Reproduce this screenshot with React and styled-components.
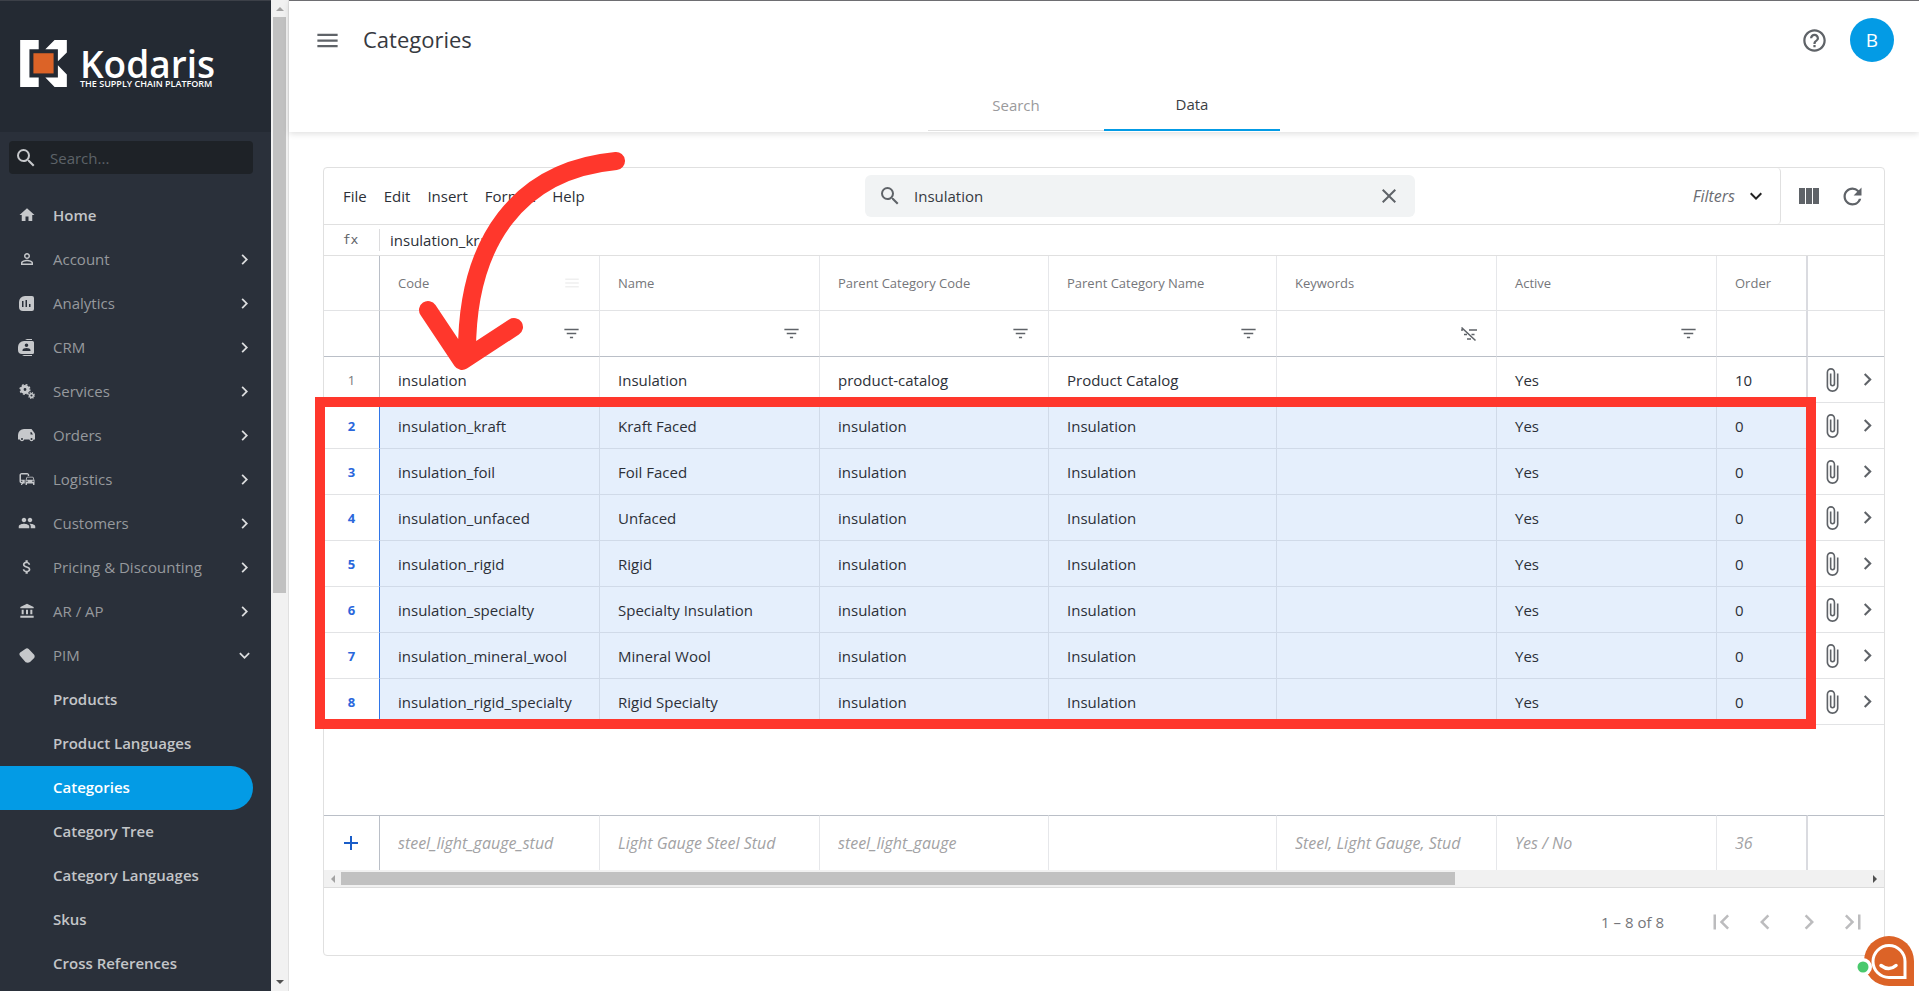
import styled, { createGlobalStyle, css } from "styled-components";
import {
  MdHome,
  MdPersonOutline,
  MdOutlineCommute,
  MdPeople,
  MdAttachMoney,
  MdAccountBalance,
  MdChevronRight,
  MdChevronLeft,
  MdExpandMore,
  MdSearch,
  MdClose,
  MdMenu,
  MdHelpOutline,
  MdRefresh,
  MdFilterList,
  MdAttachFile,
  MdFirstPage,
  MdLastPage,
  MdAdd,
} from "react-icons/md";

const GlobalStyle = createGlobalStyle`
  * {
    box-sizing: border-box;
  }

  body {
    margin: 0;
    background-color: #ffffff;
    color: #2c3038;
    font-family: "Open Sans", "Noto Sans", sans-serif;
    font-size: 15px;
    line-height: 20px;
  }

  button,
  input {
    font: inherit;
    color: inherit;
    border: none;
    background: none;
    padding: 0;
    outline: none;
  }

  svg {
    display: block;
    flex-shrink: 0;
  }
`;

/* ---------- icons ---------- */

const AnalyticsIcon = () => (
  <svg width="15" height="15" viewBox="0 0 15 15">
    <path
      fill="currentColor"
      fillRule="evenodd"
      d="M6 0h7a2 2 0 0 1 2 2v11a2 2 0 0 1-2 2H4a4 4 0 0 1-4-4V6a6 6 0 0 1 6-6zM3 5v6h1.500V5zM6.500 4v7H8V4zM10 8v3h1.500V8z"
    />
  </svg>
);

const CrmIcon = () => (
  <svg width="17" height="17" viewBox="0 0 17 17">
    <path
      fill="currentColor"
      fillRule="evenodd"
      d="M9 0h5v1H7zM6 2h8.500a1.500 1.500 0 0 1 1.500 1.500v10a1.500 1.500 0 0 1-1.500 1.500H4a4 4 0 0 1-4-4V8a6 6 0 0 1 6-6zM8.500 4.500a1.800 1.800 0 1 0 0 3.600a1.800 1.800 0 1 0 0-3.600zM4.500 12h8v-1c0-1.300-2-2-4-2s-4 .7-4 2zM4 16h10v1H6z"
    />
  </svg>
);

const GearsIcon = () => (
  <svg width="16" height="15" viewBox="0 0 16 15" fill="none" stroke="currentColor">
    <circle cx="6" cy="5.500" r="3" strokeWidth="3.200" />
    <circle cx="6" cy="5.500" r="4.900" strokeWidth="1.400" strokeDasharray="1.924" />
    <circle cx="12.500" cy="11.500" r="1.800" strokeWidth="1.500" />
    <circle cx="12.500" cy="11.500" r="2.900" strokeWidth="1.200" strokeDasharray="1.139" />
  </svg>
);

const VanIcon = () => (
  <svg width="17" height="13" viewBox="0 0 17 13">
    <path
      fill="currentColor"
      fillRule="evenodd"
      d="M6 0h7.500l3 4a2.500 2.500 0 0 1 .5 1.500v5h-1.300a2.300 2.300 0 0 1-4.400 0H6.200a2.300 2.300 0 0 1-4.400 0H0V6a6 6 0 0 1 6-6zM12.500 3v2.500h2.500L13.300 3zM4 9a1 1 0 1 0 0 2a1 1 0 1 0 0-2zM13.500 9a1 1 0 1 0 0 2a1 1 0 1 0 0-2z"
    />
  </svg>
);

const TagIcon = () => (
  <svg width="16" height="15" viewBox="0 0 46 44">
    <path
      fill="currentColor"
      d="M3 13L18 3q5-4 10 0l16 17q3 5 0 9L32 41q-6 4-13 1L2 22q-3-5 1-9z"
    />
  </svg>
);

const ColumnsIcon = () => (
  <svg width="20" height="16" viewBox="0 0 20 16" fill="currentColor">
    <rect width="6" height="16" />
    <rect x="7" width="6" height="16" />
    <rect x="14" width="6" height="16" />
  </svg>
);

const FilterOffIcon = () => (
  <svg width="18" height="16" viewBox="0 0 18 16">
    <path
      stroke="currentColor"
      strokeWidth="1.600"
      fill="none"
      d="M1.500 1.500l14 13M9 4h8M1 4h2M4 8.500h3M11.500 8.500h3M7 13h4"
    />
  </svg>
);

const LogoMark = () => (
  <svg width="47" height="47" viewBox="0 0 141 142">
    <path fill="#fff" d="M0 0h56v28H28v85h28v29H0z" />
    <path fill="#fff" d="M104 0h37v38l-27 26V28H76z" />
    <path fill="#fff" d="M114 76l27 28v38h-37l-28-29h38z" />
    <rect x="40" y="40" width="61" height="61" fill="#dc6327" />
  </svg>
);

const Triangle = ({ direction, color }) => {
  const paths = {
    up: "M0 5l4-4 4 4z",
    down: "M0 1l4 4 4-4z",
    left: "M5 0L1 4l4 4z",
    right: "M1 0l4 4-4 4z",
  };
  const vertical = direction === "up" || direction === "down";
  return (
    <svg width={vertical ? 8 : 6} height={vertical ? 6 : 8}>
      <path d={paths[direction]} fill={color} />
    </svg>
  );
};

/* ---------- sidebar ---------- */

const Layout = styled.div`
  display: flex;
  height: 100vh;
  overflow: hidden;
`;

const Sidebar = styled.aside`
  flex: 0 0 271px;
  overflow: hidden;
  background-color: #2a303a;
  color: #c6c8cb;
`;

const Brand = styled.div`
  display: flex;
  gap: 13px;
  height: 132px;
  padding: 39px 20px 0;
  border-top: 1px solid #3c4048;
  background-color: #242a33;
  color: #ffffff;
`;

const BrandText = styled.div`
  padding-top: 8px;
`;

const BrandName = styled.div`
  font-size: 37px;
  line-height: 32px;
  font-weight: 600;
`;

const BrandTagline = styled.div`
  font-size: 9px;
  line-height: 8px;
  font-weight: 600;
  white-space: nowrap;
`;

const SideSearch = styled.label`
  display: flex;
  align-items: center;
  gap: 12px;
  height: 33px;
  margin: 9px 18px 20px 9px;
  padding-left: 5px;
  border-radius: 4px;
  background-color: #1e2227;

  input {
    flex: 1;
    min-width: 0;
  }

  input::placeholder {
    color: #5d6268;
    opacity: 1;
  }
`;

const NavLink = styled.a`
  display: flex;
  align-items: center;
  height: 44px;
  margin-right: 18px;
  padding-bottom: 2px;
  color: #96999d;
  text-decoration: none;
  white-space: nowrap;

  ${(props) =>
    props.$strong &&
    css`
      color: #c3c5c8;
      font-weight: 600;
    `}

  ${(props) =>
    props.$active &&
    css`
      border-radius: 0 22px 22px 0;
      background-color: #039be5;
      color: #ffffff;
    `}
`;

const NavIcon = styled.span`
  display: flex;
  justify-content: center;
  width: 53px;
  color: #c6c8cb;
`;

const NavLabel = styled.span`
  flex: 1;
`;

const NavArrow = styled.span`
  margin-right: -2px;
  color: #dcdddf;
`;

const SideScrollbar = styled.div`
  display: flex;
  flex: 0 0 18px;
  flex-direction: column;
  align-items: center;
  justify-content: space-between;
  padding: 6px 0;
  border-right: 1px solid #e0e0e0;
  background-color: #f1f1f1;
`;

const SideThumb = styled.div`
  width: 13px;
  height: 576px;
  margin: 5px 0 auto;
  background-color: #c1c1c1;
`;

/* ---------- header ---------- */

const Main = styled.main`
  display: flex;
  flex: 1;
  flex-direction: column;
  min-width: 0;
`;

const Header = styled.header`
  display: flex;
  flex-direction: column;
  justify-content: space-between;
  height: 132px;
  padding-bottom: 1px;
  border-top: 1px solid #6e6e72;
  box-shadow: 0 2px 6px rgba(0, 0, 0, 0.12);
`;

const HeaderTop = styled.div`
  display: flex;
  align-items: center;
  height: 78px;
  padding: 0 25px;
  color: #5f6066;
`;

const Title = styled.h1`
  flex: 1;
  margin: 0 0 0 22px;
  padding-bottom: 2px;
  color: #36393f;
  font-size: 22px;
  line-height: 28px;
  font-weight: 400;
`;

const IconButton = styled.button`
  display: flex;
  align-items: center;
  justify-content: center;
  width: ${(props) => props.$width || 27}px;
  height: ${(props) => props.$height || 27}px;
  color: ${(props) => props.$color || "#5f6368"};
`;

const Avatar = styled.button`
  width: 44px;
  height: 44px;
  margin-left: 22px;
  border-radius: 50%;
  background-color: #039be5;
  color: #ffffff;
  font-size: 19px;
`;

const Tabs = styled.nav`
  display: flex;
  justify-content: center;
`;

const Tab = styled.button`
  width: 176px;
  height: 50px;
  padding-bottom: 2px;
  border-bottom: ${(props) =>
    props.$active ? "2px solid #039be5" : "1px solid #e0e0e0"};
  color: ${(props) => (props.$active ? "#3b3e44" : "#9a9a9c")};
`;

/* ---------- card ---------- */

const Card = styled.section`
  display: flex;
  flex: 1;
  flex-direction: column;
  min-height: 0;
  margin: 35px 34px;
  border: 1px solid #e0e0e0;
  border-radius: 4px;
`;

const Toolbar = styled.div`
  display: grid;
  grid-template-columns: 541px 550px 1fr;
  align-items: center;
  height: 57px;
  border-bottom: 1px solid #e0e0e0;
`;

const MenuBar = styled.div`
  display: flex;
  gap: 17px;
  padding-left: 19px;
`;

const GridSearch = styled.label`
  display: flex;
  align-items: center;
  gap: 12px;
  height: 42px;
  padding: 0 14px 0 13px;
  border-radius: 6px;
  background-color: #f1f3f4;
  color: #5f6368;

  input {
    flex: 1;
    color: #36393f;
  }
`;

const ToolbarEnd = styled.div`
  display: flex;
  align-self: stretch;
  justify-content: flex-end;
`;

const FiltersButton = styled.button`
  display: flex;
  align-items: center;
  gap: 9px;
  padding-right: 12px;
  border-right: 1px solid #e0e0e0;
  border-radius: 0 4px 4px 0;
  color: #6b6d72;
  font-size: 16px;
  font-style: italic;

  svg {
    color: #222222;
  }
`;

const ToolbarIcons = styled.div`
  display: flex;
  align-items: center;
  gap: 17px;
  padding: 0 18px 0 14px;
`;

const FormulaBar = styled.div`
  display: flex;
  align-items: center;
  height: 31px;
  border-bottom: 1px solid #e0e0e0;
`;

const FormulaLabel = styled.label`
  width: 56px;
  padding-right: 2px;
  border-right: 1px solid #dcdcde;
  color: #5f6368;
  font-family: "DejaVu Sans Mono", "Liberation Mono", monospace;
  font-size: 13px;
  line-height: 22px;
  text-align: center;
`;

const FormulaInput = styled.input`
  flex: 1;
  padding-left: 10px;
`;

const GridBody = styled.div`
  position: relative;
  flex: 1;
`;

const Table = styled.table`
  width: 100%;
  border-collapse: separate;
  border-spacing: 0;
  table-layout: fixed;
`;

const Cell = styled.td`
  height: 46px;
  padding: 0 18px;
  border-right: 1px solid #e6e7ea;
  border-bottom: 1px solid #e2e3e5;
  text-align: left;
  font-weight: 400;
  white-space: nowrap;

  &:first-child {
    padding: 0;
    border-right: 1px solid #babfc7;
    color: #77797d;
    font-size: 13px;
    text-align: center;
  }

  &:nth-last-child(2) {
    border-right: 2px solid #dadbe0;
  }

  &:last-child {
    padding: 0 3px 0 10px;
    border-right: none;
  }
`;

const HeadCell = styled(Cell).attrs({ as: "th", scope: "col" })`
  height: 55px;
  color: #75767a;
  font-size: 13px;
`;

const HeadContent = styled.div`
  display: flex;
  align-items: center;
  justify-content: space-between;

  svg {
    color: #efefef;
  }
`;

const FilterCell = styled(Cell)`
  border-bottom-color: #babfc7;

  svg {
    margin-left: auto;
    color: #5f6368;
  }
`;

const Row = styled.tr`
  ${(props) =>
    props.$selected &&
    css`
      ${Cell} {
        border-color: #d0dae8;
        background-color: #e5effc;
      }

      ${Cell}:first-child {
        border-right-color: #2f75e8;
        border-bottom-color: #e2e3e5;
        background-color: #ffffff;
        color: #2a67dc;
        font-weight: 700;
      }

      ${Cell}:last-child {
        border-bottom-color: #e2e3e5;
        background-color: #ffffff;
      }
    `}
`;

const RowActions = styled.div`
  display: flex;
  justify-content: space-between;
`;

const NewRowCell = styled(Cell)`
  height: 55px;
  border-top: 1px solid #babfc7;
  border-bottom: none;

  input {
    width: 100%;
    font-size: 16px;
    font-style: italic;
  }

  input::placeholder {
    color: #a2a2a4;
    opacity: 1;
  }
`;

const Scrollbar = styled.div`
  display: flex;
  align-items: center;
  height: 18px;
  padding: 0 6px;
  border-bottom: 1px solid #dcdcdc;
  background-color: #f1f1f1;
`;

const ScrollTrack = styled.div`
  flex: 1;
  margin: 0 5px;
`;

const ScrollThumb = styled.div`
  width: 73%;
  height: 13px;
  background-color: #c1c1c1;
`;

const Pagination = styled.footer`
  display: flex;
  align-items: center;
  justify-content: flex-end;
  height: 67px;
  padding-right: 9px;
  color: #75767a;
`;

const PageCount = styled.span`
  margin-right: 35px;
`;

/* ---------- annotations ---------- */

const Highlight = styled.div`
  position: absolute;
  top: 141px;
  right: 68px;
  left: -9px;
  height: 332px;
  border: 10px solid #ff372c;
  pointer-events: none;
`;

const Arrow = styled.svg`
  position: absolute;
  top: -106px;
  left: 89px;
  pointer-events: none;
`;

const ChatButton = styled.button`
  position: fixed;
  right: 5px;
  bottom: 4px;
`;

/* ---------- data ---------- */

const navItems = [
  { label: "Home", icon: <MdHome size={18} />, strong: true },
  { label: "Account", icon: <MdPersonOutline size={18} />, arrow: true },
  { label: "Analytics", icon: <AnalyticsIcon />, arrow: true },
  { label: "CRM", icon: <CrmIcon />, arrow: true },
  { label: "Services", icon: <GearsIcon />, arrow: true },
  { label: "Orders", icon: <VanIcon />, arrow: true },
  { label: "Logistics", icon: <MdOutlineCommute size={18} />, arrow: true },
  { label: "Customers", icon: <MdPeople size={18} />, arrow: true },
  { label: "Pricing & Discounting", icon: <MdAttachMoney size={18} />, arrow: true },
  { label: "AR / AP", icon: <MdAccountBalance size={16} />, arrow: true },
  { label: "PIM", icon: <TagIcon />, open: true },
  { label: "Products", strong: true },
  { label: "Product Languages", strong: true },
  { label: "Categories", strong: true, active: true },
  { label: "Category Tree", strong: true },
  { label: "Category Languages", strong: true },
  { label: "Skus", strong: true },
  { label: "Cross References", strong: true },
];

const columns = [
  { title: "Code", width: 220, filter: "on", placeholder: "steel_light_gauge_stud" },
  { title: "Name", width: 220, filter: "on", placeholder: "Light Gauge Steel Stud" },
  { title: "Parent Category Code", width: 229, filter: "on", placeholder: "steel_light_gauge" },
  { title: "Parent Category Name", width: 228, filter: "on", placeholder: "" },
  { title: "Keywords", width: 220, filter: "off", placeholder: "Steel, Light Gauge, Stud" },
  { title: "Active", width: 220, filter: "on", placeholder: "Yes / No" },
  { title: "Order", placeholder: "36" },
];

const rows = [
  ["insulation", "Insulation", "product-catalog", "Product Catalog", "", "Yes", "10"],
  ["insulation_kraft", "Kraft Faced", "insulation", "Insulation", "", "Yes", "0"],
  ["insulation_foil", "Foil Faced", "insulation", "Insulation", "", "Yes", "0"],
  ["insulation_unfaced", "Unfaced", "insulation", "Insulation", "", "Yes", "0"],
  ["insulation_rigid", "Rigid", "insulation", "Insulation", "", "Yes", "0"],
  ["insulation_specialty", "Specialty Insulation", "insulation", "Insulation", "", "Yes", "0"],
  ["insulation_mineral_wool", "Mineral Wool", "insulation", "Insulation", "", "Yes", "0"],
  ["insulation_rigid_specialty", "Rigid Specialty", "insulation", "Insulation", "", "Yes", "0"],
];

const Columns = () => (
  <colgroup>
    <col width="56" />
    {columns.map((column) => (
      <col key={column.title} width={column.width} />
    ))}
    <col width="76" />
  </colgroup>
);

const SideNav = () => (
  <Sidebar>
    <Brand>
      <LogoMark />
      <BrandText>
        <BrandName>Kodaris</BrandName>
        <BrandTagline>THE SUPPLY CHAIN PLATFORM</BrandTagline>
      </BrandText>
    </Brand>
    <SideSearch>
      <MdSearch size={24} />
      <input type="text" placeholder="Search..." aria-label="Search menu" />
    </SideSearch>
    <nav>
      {navItems.map((item) => (
        <NavLink key={item.label} href="#" $strong={item.strong} $active={item.active}>
          <NavIcon>{item.icon}</NavIcon>
          <NavLabel>{item.label}</NavLabel>
          {item.arrow && (
            <NavArrow>
              <MdChevronRight size={21} />
            </NavArrow>
          )}
          {item.open && (
            <NavArrow>
              <MdExpandMore size={21} />
            </NavArrow>
          )}
        </NavLink>
      ))}
    </nav>
  </Sidebar>
);

const CategoryGrid = () => (
  <>
    <GridBody>
      <Table>
        <Columns />
        <thead>
          <tr>
            <HeadCell />
            {columns.map((column, index) => (
              <HeadCell key={column.title}>
                <HeadContent>
                  {column.title}
                  {index === 0 && <MdMenu size={18} />}
                </HeadContent>
              </HeadCell>
            ))}
            <HeadCell />
          </tr>
          <tr>
            <FilterCell />
            {columns.map((column) => (
              <FilterCell key={column.title}>
                {column.filter === "on" && <MdFilterList size={19} />}
                {column.filter === "off" && <FilterOffIcon />}
              </FilterCell>
            ))}
            <FilterCell />
          </tr>
        </thead>
        <tbody>
          {rows.map((row, index) => (
            <Row key={row[0]} $selected={index > 0}>
              <Cell>{index + 1}</Cell>
              {row.map((value, i) => (
                <Cell key={columns[i].title}>{value}</Cell>
              ))}
              <Cell>
                <RowActions>
                  <IconButton aria-label="Attachments">
                    <MdAttachFile size={26} />
                  </IconButton>
                  <IconButton aria-label="Open">
                    <MdChevronRight size={25} />
                  </IconButton>
                </RowActions>
              </Cell>
            </Row>
          ))}
        </tbody>
      </Table>
      <Highlight />
      <Arrow width="220" height="230" viewBox="413 150 220 230">
        <path
          d="M616 161C520 170 466 240 467 355M428 310L462 361L514 327"
          fill="none"
          stroke="#ff372c"
          strokeWidth="18"
          strokeLinecap="round"
          strokeLinejoin="round"
        />
      </Arrow>
    </GridBody>
    <Table>
      <Columns />
      <tbody>
        <tr>
          <NewRowCell>
            <IconButton aria-label="Add row" $width={54} $color="#1a5dc8">
              <MdAdd size={24} />
            </IconButton>
          </NewRowCell>
          {columns.map((column) => (
            <NewRowCell key={column.title}>
              <input
                type="text"
                placeholder={column.placeholder}
                aria-label={`New ${column.title}`}
              />
            </NewRowCell>
          ))}
          <NewRowCell />
        </tr>
      </tbody>
    </Table>
  </>
);

const App = () => {
  return (
    <>
      <GlobalStyle />
      <Layout>
        <SideNav />
        <SideScrollbar>
          <Triangle direction="up" color="#a3a3a3" />
          <SideThumb />
          <Triangle direction="down" color="#505050" />
        </SideScrollbar>
        <Main>
          <Header>
            <HeaderTop>
              <IconButton aria-label="Toggle menu">
                <MdMenu size={27} />
              </IconButton>
              <Title>Categories</Title>
              <IconButton aria-label="Help">
                <MdHelpOutline size={27} />
              </IconButton>
              <Avatar>B</Avatar>
            </HeaderTop>
            <Tabs>
              <Tab>Search</Tab>
              <Tab $active>Data</Tab>
            </Tabs>
          </Header>
          <Card>
            <Toolbar>
              <MenuBar>
                <button>File</button>
                <button>Edit</button>
                <button>Insert</button>
                <button>Format</button>
                <button>Help</button>
              </MenuBar>
              <GridSearch>
                <MdSearch size={24} />
                <input type="text" defaultValue="Insulation" aria-label="Search grid" />
                <IconButton aria-label="Clear search" $width={24}>
                  <MdClose size={24} />
                </IconButton>
              </GridSearch>
              <ToolbarEnd>
                <FiltersButton>
                  Filters
                  <MdExpandMore size={24} />
                </FiltersButton>
                <ToolbarIcons>
                  <IconButton aria-label="Columns">
                    <ColumnsIcon />
                  </IconButton>
                  <IconButton aria-label="Refresh">
                    <MdRefresh size={27} />
                  </IconButton>
                </ToolbarIcons>
              </ToolbarEnd>
            </Toolbar>
            <FormulaBar>
              <FormulaLabel htmlFor="formula">fx</FormulaLabel>
              <FormulaInput id="formula" type="text" defaultValue="insulation_kraft" />
            </FormulaBar>
            <CategoryGrid />
            <Scrollbar>
              <Triangle direction="left" color="#a3a3a3" />
              <ScrollTrack>
                <ScrollThumb />
              </ScrollTrack>
              <Triangle direction="right" color="#505050" />
            </Scrollbar>
            <Pagination>
              <PageCount>1 – 8 of 8</PageCount>
              <IconButton aria-label="First page" $width={44} $color="#bcbcbe">
                <MdFirstPage size={30} />
              </IconButton>
              <IconButton aria-label="Previous page" $width={44} $color="#bcbcbe">
                <MdChevronLeft size={30} />
              </IconButton>
              <IconButton aria-label="Next page" $width={44} $color="#bcbcbe">
                <MdChevronRight size={30} />
              </IconButton>
              <IconButton aria-label="Last page" $width={44} $color="#bcbcbe">
                <MdLastPage size={30} />
              </IconButton>
            </Pagination>
          </Card>
        </Main>
      </Layout>
      <ChatButton aria-label="Chat">
        <svg width="59" height="51" viewBox="-2 0 59 51">
          <path fill="#dc6327" d="M32 0a25 25 0 0 1 25 25v25H32a25 25 0 0 1 0-50z" />
          <path
            fill="none"
            stroke="#fff"
            strokeWidth="3"
            d="M32 9.500a16 16 0 0 1 16 16v16H32a16 16 0 0 1 0-32z"
          />
          <path
            fill="none"
            stroke="#fff"
            strokeWidth="3.500"
            strokeLinecap="round"
            d="M24 29.500q8 6 15 0"
          />
          <circle cx="6" cy="31" r="9" fill="#fff" />
          <circle cx="6" cy="31" r="5.500" fill="#49c96d" />
        </svg>
      </ChatButton>
    </>
  );
};

export default App;
